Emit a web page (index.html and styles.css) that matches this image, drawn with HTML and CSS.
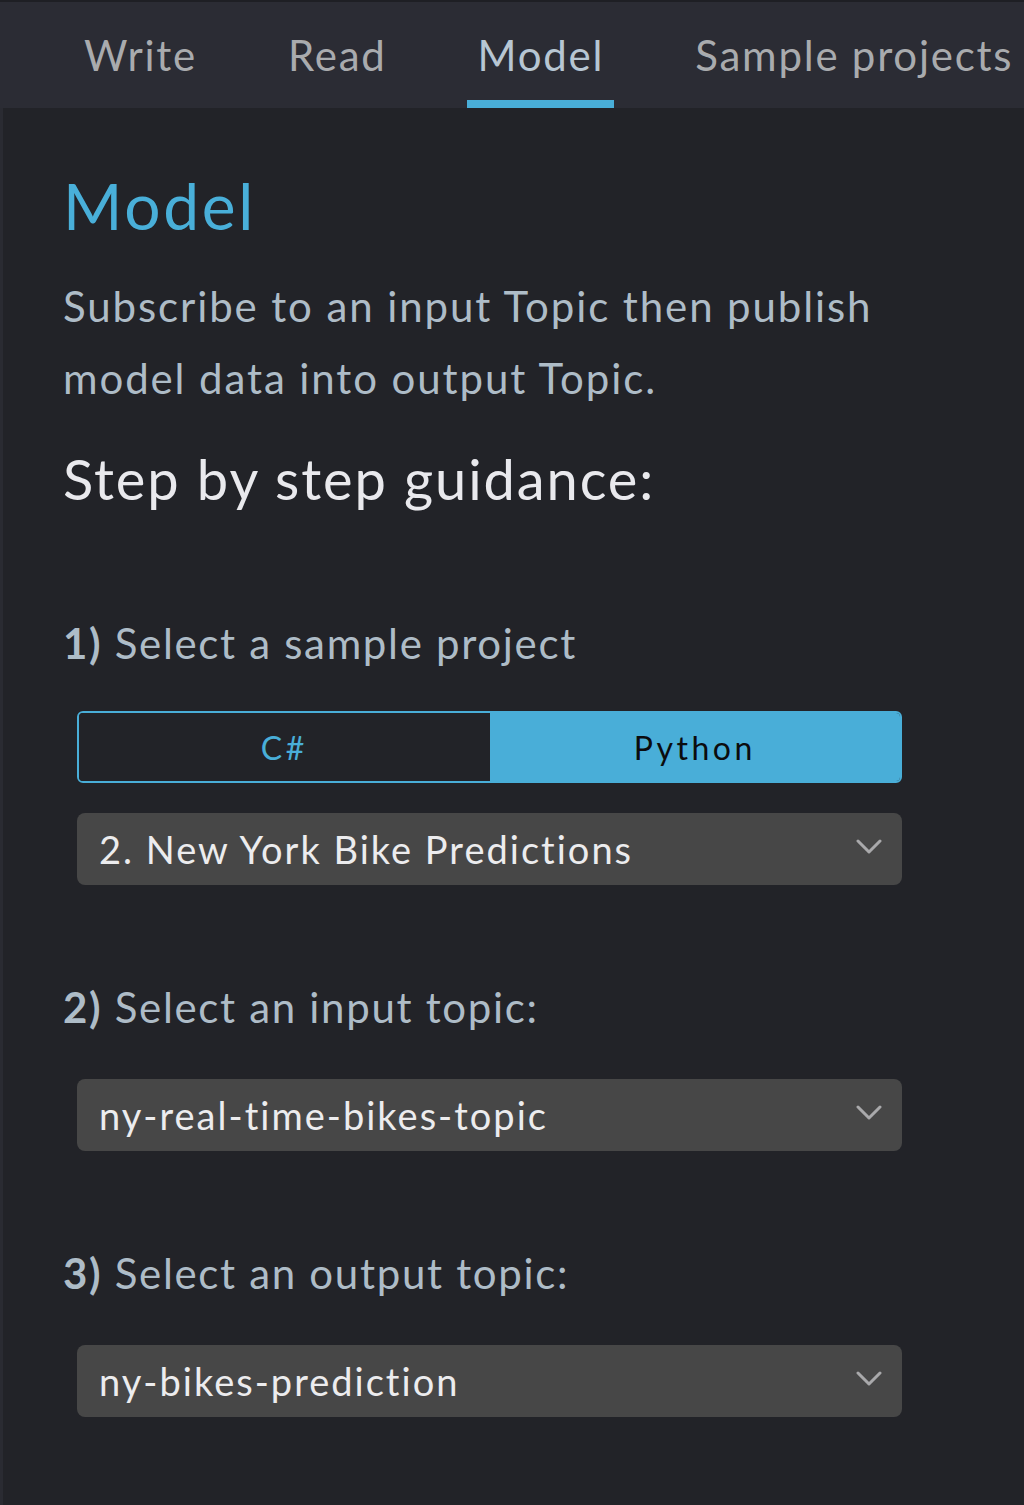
FILE: index.html
```html
<!DOCTYPE html>
<html lang="en">
<head>
<meta charset="utf-8">
<title>Model</title>
<link rel="stylesheet" href="styles.css">
</head>
<body>
<nav class="tabs">
  <a class="tab">Write</a>
  <a class="tab">Read</a>
  <a class="tab active">Model</a>
  <a class="tab">Sample projects</a>
</nav>
<main class="content">
  <h1 class="title">Model</h1>
  <p class="lead">Subscribe to an input Topic then publish model data into output Topic.</p>
  <h2 class="guide">Step by step guidance:</h2>

  <section class="step step-first">
    <div class="step-label"><b>1)</b> Select a sample project</div>
    <div class="toggle">
      <button class="toggle-btn">C#</button>
      <button class="toggle-btn on">Python</button>
    </div>
    <div class="select">
      <span class="select-text">2. New York Bike Predictions</span>
      <svg class="chev" viewBox="0 0 26 16" width="26" height="16"><path d="M2 2 L13 13 L24 2" fill="none" stroke="#a9a9ab" stroke-width="3" stroke-linecap="round" stroke-linejoin="round"/></svg>
    </div>
  </section>

  <section class="step">
    <div class="step-label"><b>2)</b> Select an input topic:</div>
    <div class="select">
      <span class="select-text">ny-real-time-bikes-topic</span>
      <svg class="chev" viewBox="0 0 26 16" width="26" height="16"><path d="M2 2 L13 13 L24 2" fill="none" stroke="#a9a9ab" stroke-width="3" stroke-linecap="round" stroke-linejoin="round"/></svg>
    </div>
  </section>

  <section class="step">
    <div class="step-label"><b>3)</b> Select an output topic:</div>
    <div class="select">
      <span class="select-text">ny-bikes-prediction</span>
      <svg class="chev" viewBox="0 0 26 16" width="26" height="16"><path d="M2 2 L13 13 L24 2" fill="none" stroke="#a9a9ab" stroke-width="3" stroke-linecap="round" stroke-linejoin="round"/></svg>
    </div>
  </section>
</main>
</body>
</html>
```

FILE: styles.css
```css
html, body {
  margin: 0;
  padding: 0;
}
body {
  background: #222328;
  font-family: Lato, "Noto Sans", "Liberation Sans", sans-serif;
  letter-spacing: 0.045em;
  width: 1024px;
  min-height: 1505px;
}
.tabs {
  display: flex;
  align-items: stretch;
  height: 106px;
  border-top: 2px solid #1e1f24;
  background: #2b2c34;
  padding-left: 84px;
  white-space: nowrap;
  overflow: hidden;
}
.tab {
  display: flex;
  align-items: center;
  font-size: 42px;
  letter-spacing: 0.042em;
  color: #a9abae;
  padding: 8px 10px 0 11px;
  margin-right: 70px;
  box-sizing: border-box;
  border-bottom: 8px solid transparent;
}
.tab:first-child {
  padding-left: 0;
}
.tab.active {
  color: #b7c6d3;
  border-bottom-color: #49aed8;
}
.content {
  border-left: 3px solid #2a2b32;
  padding: 0 0 60px 60px;
  min-height: 1397px;
  box-sizing: border-box;
}
.title {
  margin: 0;
  padding-top: 60px;
  font-size: 64px;
  font-weight: 400;
  line-height: 76px;
  letter-spacing: 0.043em;
  color: #49afd9;
}
.lead {
  margin: 26px 0 0;
  width: 900px;
  font-size: 42px;
  line-height: 72px;
  letter-spacing: 0.045em;
  color: #aebcc7;
}
.guide {
  margin: 29px 0 0;
  font-size: 56px;
  font-weight: 400;
  line-height: 72px;
  letter-spacing: 0.034em;
  color: #e9e9ed;
}
.step {
  display: flex;
  flex-direction: column;
  margin-top: 94px;
}
.step-first {
  margin-top: 100px;
}
.step-label {
  font-size: 42px;
  line-height: 56px;
  letter-spacing: 0.04em;
  color: #aebcc7;
}
.step-label b {
  font-weight: 700;
}
.toggle {
  display: flex;
  margin: 40px 0 0 14px;
  width: 825px;
  height: 72px;
  box-sizing: border-box;
  border: 2px solid #49aed8;
  border-radius: 6px;
  overflow: hidden;
}
.toggle-btn {
  flex: 1;
  border: 0;
  background: #222328;
  color: #49aed8;
  font-family: inherit;
  font-size: 32px;
  letter-spacing: 3.5px;
  padding: 0;
}
.toggle-btn.on {
  background: #49aed8;
  color: #0b0c0e;
}
.select {
  display: flex;
  align-items: center;
  justify-content: space-between;
  margin: 30px 0 0 14px;
  width: 825px;
  height: 72px;
  box-sizing: border-box;
  padding: 0 20px 0 22px;
  background: #474747;
  border-radius: 8px;
}
.step .step-label + .select {
  margin-top: 44px;
}
.select-text {
  font-size: 38px;
  letter-spacing: 0.053em;
  color: #ececee;
}
.chev {
  display: block;
  margin-top: -4px;
}
```
